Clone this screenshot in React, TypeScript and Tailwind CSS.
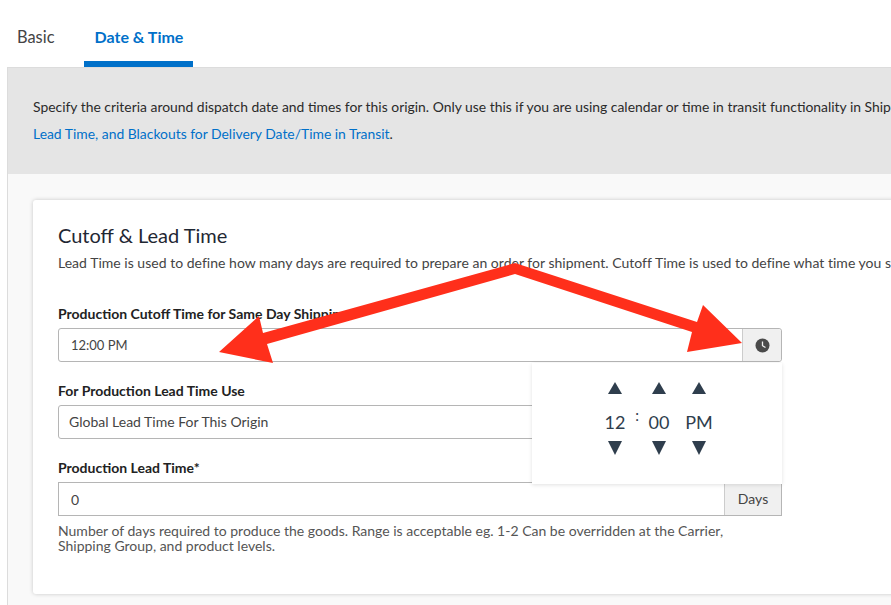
function Up() {
  return <svg width="14" height="12" viewBox="0 0 14 12" className="fill-[#2f3e4d]"><polygon points="7,0 14,12 0,12" /></svg>;
}

function Down() {
  return <svg width="14" height="14" viewBox="0 0 14 14" className="fill-[#2f3e4d]"><polygon points="0,0 14,0 7,14" /></svg>;
}

function TimeCol({ value, className }: { value: string; className: string }) {
  return (
    <div className={`flex flex-col items-center ${className}`}>
      <Up />
      <span className="mt-[16px] mb-[7px] text-[18px] leading-[24px] text-[#2f3e4d]">{value}</span>
      <Down />
    </div>
  );
}

function Arrows() {
  return (
    <svg className="absolute left-0 top-0 pointer-events-none" width="891" height="605" viewBox="0 0 891 605">
      <polygon
        className="fill-[#ff2f1b]"
        points="219,352 259,316 263,333 515,263 697,322 703,305 742,343 687,352 692,332 515,274 267,344 273,363"
      />
    </svg>
  );
}

export default function App() {
  return (
    <div className="relative w-[891px] h-[605px] overflow-hidden bg-white font-['Lato',sans-serif] text-[14px] text-[#333]">
      {/* Tabs */}
      <div className="flex h-[67px] pl-[7px]">
        <div className="px-[10px] pt-[27px] text-[16.4px] leading-[20px] text-[#444]">Basic</div>
        <div className="ml-[20px] w-[109px] text-center pt-[27px] text-[16px] leading-[20px] font-bold text-[#0070c9] border-b-[6px] border-[#0070c9]">Date &amp; Time</div>
      </div>

      <div className="ml-[7px] h-[538px] bg-[#f9f9f9] border-l border-t border-[#dcdcdc]">
        {/* Info banner */}
        <div className="h-[106px] bg-[#e5e5e5] pl-[25px] pt-[29px] whitespace-nowrap text-[13.9px] leading-[20px] text-[#2b2b2b]">
          <p>Specify the criteria around dispatch date and times for this origin. Only use this if you are using calendar or time in transit functionality in Shipping</p>
          <p className="mt-[7px]"><span className="text-[#0070c9]">Lead Time, and Blackouts for Delivery Date/Time in Transit</span>.</p>
        </div>

        {/* Card */}
        <div className="mt-[26px] ml-[25px] w-[900px] h-[394px] bg-white rounded-[3px] shadow-[0_0_4px_rgba(0,0,0,0.2)] pl-[25px] pt-[23px]">
          <h2 className="text-[20px] leading-[24px] text-[#1f2733]">Cutoff &amp; Lead Time</h2>
          <p className="mt-[7px] whitespace-nowrap text-[14px] tracking-[0.02px] leading-[18px] text-[#444]">Lead Time is used to define how many days are required to prepare an order for shipment. Cutoff Time is used to define what time you stop</p>

          <div className="w-[724px]">
            <label className="block mt-[33px] text-[14px] leading-[18px] font-bold text-[#222]">Production Cutoff Time for Same Day Shipping</label>
            <div className="relative mt-[5px] flex h-[34px] rounded-[3px] border border-[#b5b5b5] bg-white">
              <div className="flex-1 pl-[12px] text-[13px] leading-[33px] text-[#444]">12:00 PM</div>
              <div className="w-[39px] flex items-center justify-center border-l border-[#ccc] bg-[#f0f0f0] rounded-r-[3px]">
                <svg width="15" height="15" viewBox="0 0 15 15">
                  <circle cx="7.5" cy="7.5" r="7" className="fill-[#4a4a4a]" />
                  <path d="M7.5 3.5V7.7L10.5 9.5" className="stroke-[#f0f0f0] fill-none" strokeWidth="1.3" />
                </svg>
              </div>
              {/* Time picker popover */}
              <div className="absolute z-10 right-[-1px] top-[34px] w-[250px] h-[121px] bg-white shadow-[0_1px_4px_rgba(0,0,0,0.12)] flex items-start pl-[68px] pt-[19px]">
                <TimeCol value="12" className="w-[30px]" />
                <span className="w-[14px] mt-[24px] text-center text-[15px] leading-[18px] text-[#2f3e4d]">:</span>
                <TimeCol value="00" className="w-[30px]" />
                <TimeCol value="PM" className="w-[40px] ml-[5px]" />
              </div>
            </div>

            <label className="block mt-[20px] text-[14px] leading-[18px] font-bold text-[#222]">For Production Lead Time Use</label>
            <div className="mt-[5px] h-[34px] rounded-[3px] border border-[#b5b5b5] bg-white pl-[10px] text-[14px] leading-[31px] text-[#444]">Global Lead Time For This Origin</div>

            <label className="block mt-[20px] text-[14px] leading-[18px] font-bold text-[#222]">Production Lead Time*</label>
            <div className="mt-[5px] flex h-[34px] border border-[#b5b5b5] bg-white">
              <div className="flex-1 pl-[12px] text-[14px] leading-[33px] text-[#444]">0</div>
              <div className="w-[57px] text-center border-l border-[#ccc] bg-[#f0f0f0] text-[14px] leading-[31px] text-[#444]">Days</div>
            </div>
            <p className="mt-[7px] max-w-[680px] text-[14px] leading-[15px] text-[#555]">Number of days required to produce the goods. Range is acceptable eg. 1-2 Can be overridden at the Carrier, Shipping Group, and product levels.</p>
          </div>
        </div>
      </div>

      <Arrows />
    </div>
  );
}
